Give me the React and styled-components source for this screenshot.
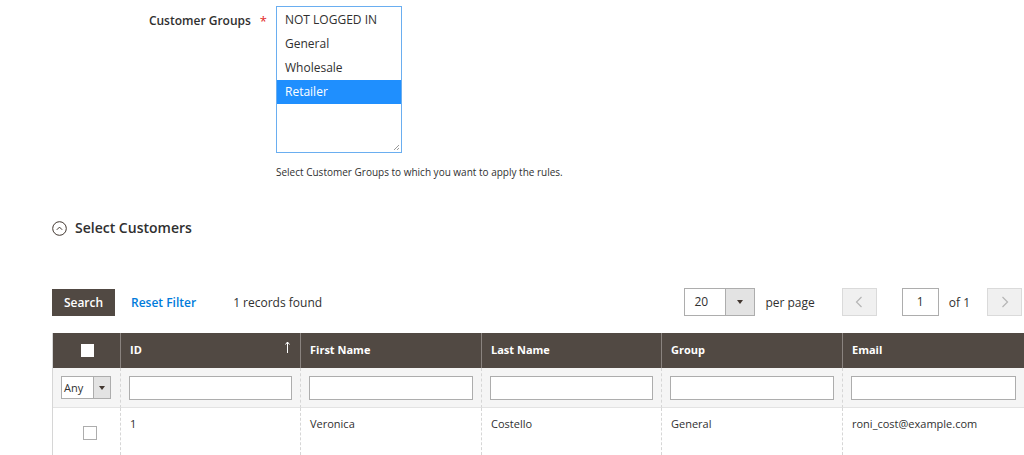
import React from 'react';
import styled, { createGlobalStyle } from 'styled-components';

const GlobalStyle = createGlobalStyle`
  html, body {
    margin: 0;
    padding: 0;
    background: #fff;
  }
  body {
    font-family: 'Open Sans', 'Liberation Sans', sans-serif;
    color: #303030;
    overflow: hidden;
  }
`;

const Page = styled.div`
  width: 1024px;
  height: 455px;
  padding: 6px 0 0 52px;
  box-sizing: border-box;
  overflow: hidden;
`;

const FieldRow = styled.div`
  display: grid;
  grid-template-columns: 224px 126px;
  align-items: start;
`;

const Label = styled.div`
  display: flex;
  justify-content: flex-end;
  align-items: center;
  gap: 9px;
  padding: 7px 9px 0 0;
  font-size: 12px;
  font-weight: 600;
  color: #303030;
  line-height: 16px;
`;

const Required = styled.span`
  color: #e22626;
  font-size: 13px;
  font-weight: 400;
`;

const ListBox = styled.div`
  position: relative;
  width: 126px;
  height: 147px;
  box-sizing: border-box;
  padding-top: 1px;
  border: 1px solid #6aaef0;
  background: #fff;
`;

const Option = styled.div`
  height: 24px;
  line-height: 24px;
  padding-left: 8px;
  font-size: 12px;
  background: ${({ selected }) => (selected ? '#1f8ffe' : 'transparent')};
  color: ${({ selected }) => (selected ? '#fff' : '#303030')};
`;

const Grip = styled.svg`
  position: absolute;
  right: 1px;
  bottom: 1px;
`;

const Note = styled.div`
  margin: 12px 0 0 224px;
  font-size: 10px;
  color: #303030;
  line-height: 14px;
`;

const SectionTitle = styled.div`
  display: flex;
  align-items: center;
  gap: 8px;
  margin-top: 39px;
  font-size: 14px;
  font-weight: 600;
  color: #303030;
  line-height: 20px;
`;

const Toolbar = styled.div`
  display: flex;
  align-items: center;
  margin-top: 50px;
  height: 28px;
`;

const SearchButton = styled.button`
  height: 27px;
  width: 63px;
  border: 1px solid #514943;
  background: #514943;
  color: #fff;
  font-family: inherit;
  font-size: 12px;
  font-weight: 600;
  padding: 0;
`;

const LinkText = styled.span`
  margin-left: 16px;
  color: #007bdb;
  font-size: 12px;
  font-weight: 600;
`;

const Found = styled.span`
  margin-left: 37px;
  font-size: 12px;
  color: #303030;
`;

const Pager = styled.div`
  margin-left: auto;
  margin-right: 2px;
  display: flex;
  align-items: center;
`;

const PerPage = styled.div`
  display: flex;
  width: 71px;
  height: 28px;
  box-sizing: border-box;
  border: 1px solid #adadad;
`;

const SelectValue = styled.div`
  flex: 1;
  padding-left: 9px;
  font-size: 12px;
  line-height: 26px;
  background: #fff;
`;

const SelectArrow = styled.div`
  width: ${({ small }) => (small ? '16px' : '28px')};
  border-left: 1px solid #adadad;
  background: #e3e3e3;
  display: flex;
  align-items: center;
  justify-content: center;
`;

const Triangle = styled.span`
  width: 0;
  height: 0;
  border-left: 3px solid transparent;
  border-right: 3px solid transparent;
  border-top: 4px solid #41362f;
`;

const PagerText = styled.span`
  font-size: 12px;
  color: #303030;
  margin: ${({ m }) => m};
`;

const NavButton = styled.div`
  width: 35px;
  height: 28px;
  box-sizing: border-box;
  border: 1px solid #dadada;
  background: #f0f0f0;
  display: flex;
  align-items: center;
  justify-content: center;
`;

const PageInput = styled.div`
  width: 37px;
  height: 28px;
  box-sizing: border-box;
  border: 1px solid #adadad;
  font-size: 12px;
  line-height: 26px;
  text-align: center;
  margin-left: 25px;
`;

const Table = styled.div`
  margin-top: 17px;
  width: 972px;
  display: grid;
  grid-template-columns: 67px 180px 181px 180px 181px 182px;
  border-left: 1px solid #d6d6d6;
`;

const HeadCell = styled.div`
  position: relative;
  height: 35px;
  box-sizing: border-box;
  background: #514943;
  color: #fff;
  font-size: 11px;
  font-weight: 700;
  padding: 0 0 2px 9px;
  display: flex;
  align-items: center;
  justify-content: ${({ center }) => (center ? 'center' : 'flex-start')};
  border-left: ${({ first }) => (first ? 'none' : '1px solid #8a837f')};
`;

const SortMark = styled.svg`
  position: absolute;
  right: 10px;
  top: 8px;
`;

const HeadCheck = styled.span`
  width: 13px;
  height: 13px;
  background: #fff;
  margin: 2px 0 0 -8px;
`;

const FilterCell = styled.div`
  height: 40px;
  box-sizing: border-box;
  background: #f5f5f5;
  padding: 8px 8px;
  border-left: ${({ first }) => (first ? 'none' : '1px dashed #d6d6d6')};
  border-bottom: 1px solid #e3e3e3;
`;

const FilterInput = styled.div`
  height: 24px;
  box-sizing: border-box;
  border: 1px solid #adadad;
  background: #fff;
`;

const AnySelect = styled.div`
  display: flex;
  width: 50px;
  height: 23px;
  box-sizing: border-box;
  border: 1px solid #adadad;
  background: #fff;
  font-size: 11px;
  line-height: 21px;
`;

const AnyText = styled.span`
  flex: 1;
  padding-left: 2px;
`;

const BodyCell = styled.div`
  height: 47px;
  box-sizing: border-box;
  padding: 8px 9px 0;
  font-size: 11px;
  color: #303030;
  border-left: ${({ first }) => (first ? 'none' : '1px dashed #d6d6d6')};
  display: flex;
  justify-content: ${({ center }) => (center ? 'center' : 'flex-start')};
`;

const RowCheck = styled.span`
  width: 14px;
  height: 14px;
  box-sizing: border-box;
  border: 1px solid #adadad;
  background: #fff;
  margin: 10px 0 0 6px;
`;

const Chevron = ({ dir }) => (
  <svg width="8" height="12" viewBox="0 0 8 12">
    <path
      d={dir === 'left' ? 'M6.5 1 L1.5 6 L6.5 11' : 'M1.5 1 L6.5 6 L1.5 11'}
      fill="none"
      stroke="#b5b5b5"
      strokeWidth="1.2"
    />
  </svg>
);

const groups = ['NOT LOGGED IN', 'General', 'Wholesale', 'Retailer'];
const columns = ['ID', 'First Name', 'Last Name', 'Group', 'Email'];
const row = ['1', 'Veronica', 'Costello', 'General', 'roni_cost@example.com'];

const App = () => (
  <>
    <GlobalStyle />
    <Page>
      <FieldRow>
        <Label>
          Customer Groups <Required>*</Required>
        </Label>
        <ListBox>
          {groups.map((g) => (
            <Option key={g} selected={g === 'Retailer'}>
              {g}
            </Option>
          ))}
          <Grip width="8" height="8" viewBox="0 0 8 8">
            <path d="M7 2 L2 7 M7 5 L5 7" stroke="#9a9a9a" strokeWidth="1" />
          </Grip>
        </ListBox>
      </FieldRow>
      <Note>Select Customer Groups to which you want to apply the rules.</Note>

      <SectionTitle>
        <svg width="15" height="15" viewBox="0 0 15 15">
          <circle cx="7.5" cy="7.5" r="6.8" fill="none" stroke="#41362f" strokeWidth="1" />
          <path d="M4.8 8.8 L7.5 6.1 L10.2 8.8" fill="none" stroke="#41362f" strokeWidth="1" />
        </svg>
        Select Customers
      </SectionTitle>

      <Toolbar>
        <SearchButton>Search</SearchButton>
        <LinkText>Reset Filter</LinkText>
        <Found>1 records found</Found>
        <Pager>
          <PerPage>
            <SelectValue>20</SelectValue>
            <SelectArrow>
              <Triangle />
            </SelectArrow>
          </PerPage>
          <PagerText m="0 27px 0 10px">per page</PagerText>
          <NavButton>
            <Chevron dir="left" />
          </NavButton>
          <PageInput>1</PageInput>
          <PagerText m="0 17px 0 10px">of 1</PagerText>
          <NavButton>
            <Chevron dir="right" />
          </NavButton>
        </Pager>
      </Toolbar>

      <Table>
        <HeadCell first center>
          <HeadCheck />
        </HeadCell>
        {columns.map((c) => (
          <HeadCell key={c}>
            {c}
            {c === 'ID' && (
              <SortMark width="5" height="12" viewBox="0 0 5 12">
                <path d="M2.5 1 L2.5 12 M0.5 3.5 L2.5 1 L4.5 3.5" fill="none" stroke="#fff" strokeWidth="1" />
              </SortMark>
            )}
          </HeadCell>
        ))}

        <FilterCell first>
          <AnySelect>
            <AnyText>Any</AnyText>
            <SelectArrow small>
              <Triangle />
            </SelectArrow>
          </AnySelect>
        </FilterCell>
        {columns.map((c) => (
          <FilterCell key={c}>
            <FilterInput />
          </FilterCell>
        ))}

        <BodyCell first center>
          <RowCheck />
        </BodyCell>
        {row.map((v, i) => (
          <BodyCell key={i}>{v}</BodyCell>
        ))}
      </Table>
    </Page>
  </>
);

export default App;
